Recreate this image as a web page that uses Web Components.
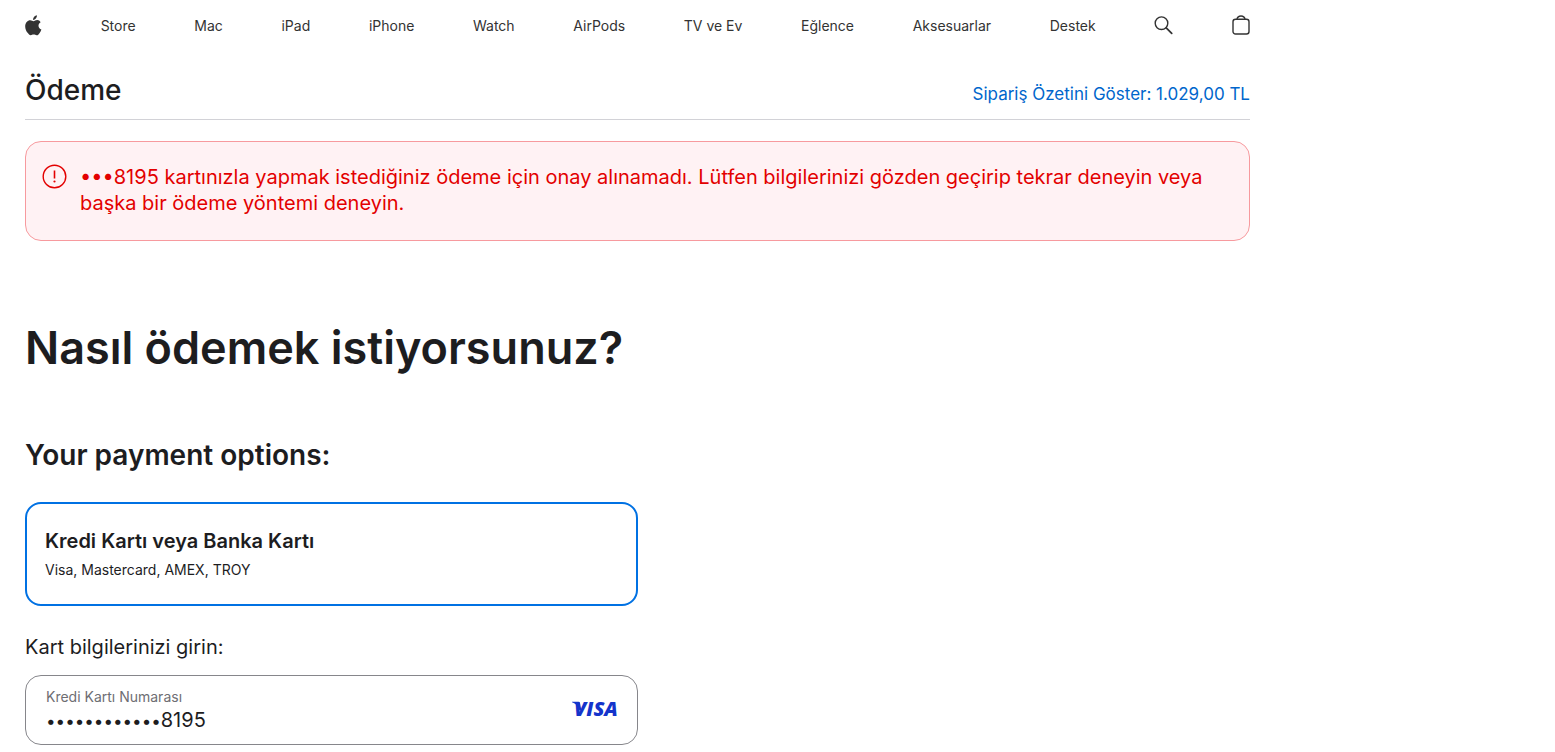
<!DOCTYPE html>
<html lang="tr">
<head>
<meta charset="utf-8">
<meta name="viewport" content="width=device-width, initial-scale=1">
<title>Ödeme</title>
<style>
  body { margin: 0; background: #fff; color: #1d1d1f; font-family: Inter, "Noto Sans", sans-serif; }
</style>
</head>
<body>
<checkout-page>
  <global-nav slot="nav"></global-nav>
  <checkout-header slot="header" heading="Ödeme">Sipariş Özetini Göster: 1.029,00 TL</checkout-header>
  <error-alert slot="alert">•••8195 kartınızla yapmak istediğiniz ödeme için onay alınamadı. Lütfen bilgilerinizi gözden geçirip tekrar deneyin veya başka bir ödeme yöntemi deneyin.</error-alert>
  <payment-section></payment-section>
</checkout-page>

<script>
class BaseElement extends HTMLElement {
  connectedCallback() {
    if (this.shadowRoot) return;
    this.attachShadow({ mode: "open" }).innerHTML = this.render();
  }
}

customElements.define("checkout-page", class extends BaseElement {
  render() {
    return `<style>
      :host { display: block; box-sizing: border-box; max-width: 1275px; padding: 0 25px; }
      main { display: block; }
    </style>
    <slot name="nav"></slot>
    <slot name="header"></slot>
    <main><slot name="alert"></slot><slot></slot></main>`;
  }
});

customElements.define("global-nav", class extends BaseElement {
  render() {
    const items = ["Store", "Mac", "iPad", "iPhone", "Watch", "AirPods", "TV ve Ev", "Eğlence", "Aksesuarlar", "Destek"];
    return `<style>
      :host { display: block; color: #333; }
      ul { display: flex; justify-content: space-between; align-items: center; height: 52px; margin: 0; padding: 0; list-style: none; }
      a, button { display: block; color: inherit; font-family: inherit; font-size: 14px; line-height: 20px; text-decoration: none; }
      button { padding: 0; border: 0; background: none; cursor: pointer; }
      svg { display: block; }
      .icon { padding-bottom: 2px; }
    </style>
    <nav aria-label="Global"><ul>
      <li><a class="icon" href="#" aria-label="Apple"><svg width="17" height="21" viewBox="0 0 17 21" fill="#333"><path d="M11.9 0.3c.15 1.2-.35 2.4-1.05 3.2-.75.9-1.8 1.5-2.75 1.4-.15-1.15.4-2.35 1.05-3.1C9.9.95 11 .35 11.9.3zM15.6 7.3c-1.35.85-2.1 1.95-2.1 3.45 0 1.75 1.2 3.15 2.9 3.8-.4 1.3-1.15 2.5-1.95 3.65-.75 1.05-1.5 2.1-2.75 2.1-1.2 0-1.65-.7-3.05-.7s-1.8.7-2.95.7c-1.2 0-2.1-1.15-2.85-2.2C1.200 16.2.2 13.8.2 11.400c0-3.7 2.450-6.200 5.050-6.200 1.350 0 2.450.95 3.350.95.8 0 2.100-1.050 3.650-1.050 1.350 0 2.550.75 3.350 2.200z"/></svg></a></li>
      ${items.map(t => `<li><a href="#">${t}</a></li>`).join("")}
      <li><button class="icon" type="button" aria-label="Ara"><svg width="19" height="19" viewBox="0 0 19 19" fill="none" stroke="#333" stroke-width="1.4" stroke-linecap="round"><circle cx="7.5" cy="7.2" r="6.300"/><path d="M12.200 11.900L17.700 17.300" stroke-width="1.800"/></svg></button></li>
      <li><button class="icon" type="button" aria-label="Alışveriş Çantası"><svg width="18" height="20" viewBox="0 0 18 20" fill="none" stroke="#333" stroke-width="1.400"><rect x="1" y="4.200" width="16" height="14.800" rx="2.500"/><path d="M5 4.200C5.400 2.200 6.900 1 9 1s3.600 1.200 4 3.200"/></svg></button></li>
    </ul></nav>`;
  }
});

customElements.define("checkout-header", class extends BaseElement {
  render() {
    return `<style>
      :host { display: block; }
      header { display: flex; justify-content: space-between; align-items: baseline; padding: 20px 0 11px; border-bottom: 1px solid #d2d2d7; }
      h2 { margin: 0; font-size: 28px; line-height: 36px; font-weight: 500; }
      a { color: #06c; font-size: 17px; line-height: 24px; text-decoration: none; }
    </style>
    <header><h2>${this.getAttribute("heading")}</h2><a href="#"><slot></slot></a></header>`;
  }
});

customElements.define("error-alert", class extends BaseElement {
  render() {
    return `<style>
      :host { display: block; margin-top: 21px; }
      div { display: flex; gap: 13px; padding: 22px 16px 24px; border: 1px solid #f79a9e; border-radius: 16px; background: #fff2f4; color: #e30000; }
      svg { flex: none; }
      p { margin: 0; font-size: 20px; line-height: 26px; }
    </style>
    <div role="alert">
      <svg width="25" height="25" viewBox="0 0 25 25" fill="none" stroke="#e30000" stroke-width="1.400" aria-hidden="true"><circle cx="12.500" cy="12.500" r="11.300"/><path d="M12.500 6.500v8" stroke-width="1.600"/><circle cx="12.500" cy="17.500" r="1.100" fill="#e30000" stroke="none"/></svg>
      <p><slot></slot></p>
    </div>`;
  }
});

customElements.define("payment-section", class extends BaseElement {
  render() {
    return `<style>
      :host { display: block; padding-top: 77px; }
      h1 { margin: 0; font-size: 45px; line-height: 60px; font-weight: 600; }
      h2 { margin: 59px 0 0; font-size: 28px; line-height: 36px; font-weight: 600; }
      h3 { margin: 27px 0 0; font-size: 20px; line-height: 28px; font-weight: 400; }
      .column { width: 50%; }
      payment-option { margin-top: 29px; }
      card-field { margin-top: 14px; }
    </style>
    <h1>Nasıl ödemek istiyorsunuz?</h1>
    <h2>Your payment options:</h2>
    <div class="column">
      <payment-option heading="Kredi Kartı veya Banka Kartı">Visa, Mastercard, AMEX, TROY</payment-option>
      <h3>Kart bilgilerinizi girin:</h3>
      <card-field label="Kredi Kartı Numarası" mask="••••••••••••" value="8195"></card-field>
    </div>`;
  }
});

customElements.define("payment-option", class extends BaseElement {
  render() {
    return `<style>
      :host { display: block; }
      label { display: grid; padding: 21px 18px 22px; border: 2px solid #0071e3; border-radius: 16px; cursor: pointer; }
      input { grid-area: 1 / 1 / 3 / 2; appearance: none; margin: 0; width: 100%; height: 100%; outline: 0; }
      strong { grid-area: 1 / 1; font-size: 20px; line-height: 32px; font-weight: 600; }
      small { grid-area: 2 / 1; font-size: 14px; line-height: 25px; }
    </style>
    <label for="card"><input id="card" type="radio" name="payment" checked><strong>${this.getAttribute("heading")}</strong><small><slot></slot></small></label>`;
  }
});

customElements.define("card-field", class extends BaseElement {
  render() {
    return `<style>
      :host { display: block; }
      .box { display: flex; align-items: center; padding: 10px 18px 10px 20px; border: 1px solid #86868b; border-radius: 16px; }
      .text { flex: 1; min-width: 0; }
      label { display: block; color: #6e6e73; font-size: 14px; line-height: 22px; }
      .value { display: flex; align-items: baseline; height: 26px; }
      .mask { flex: none; font-size: 17px; line-height: 20px; }
      input { flex: 1; min-width: 0; box-sizing: border-box; height: 24px; padding: 0; border: 0; outline: 0; background: none; color: #1d1d1f; font-family: inherit; font-size: 20px; line-height: 24px; }
    </style>
    <div class="box">
      <div class="text">
        <label for="number">${this.getAttribute("label")}</label>
        <div class="value"><span class="mask">${this.getAttribute("mask")}</span><input id="number" type="text" inputmode="numeric" value="${this.getAttribute("value")}"></div>
      </div>
      <visa-logo></visa-logo>
    </div>`;
  }
});

customElements.define("visa-logo", class extends BaseElement {
  render() {
    return `<style>
      :host { display: block; flex: none; }
      svg { display: block; overflow: visible; }
      text { font-family: "Open Sans", sans-serif; font-size: 20px; font-weight: 800; font-style: italic; }
    </style>
    <svg width="48" height="18" viewBox="0 0 48 18" fill="#1434cb" role="img" aria-label="Visa"><path d="M1 .7h6.500q1.300 0 1.500 1.200l1.500 8L6.500 8Q6 2.600 1 1.300z"/><text x="3" y="15">VISA</text></svg>`;
  }
});
</script>
</body>
</html>
